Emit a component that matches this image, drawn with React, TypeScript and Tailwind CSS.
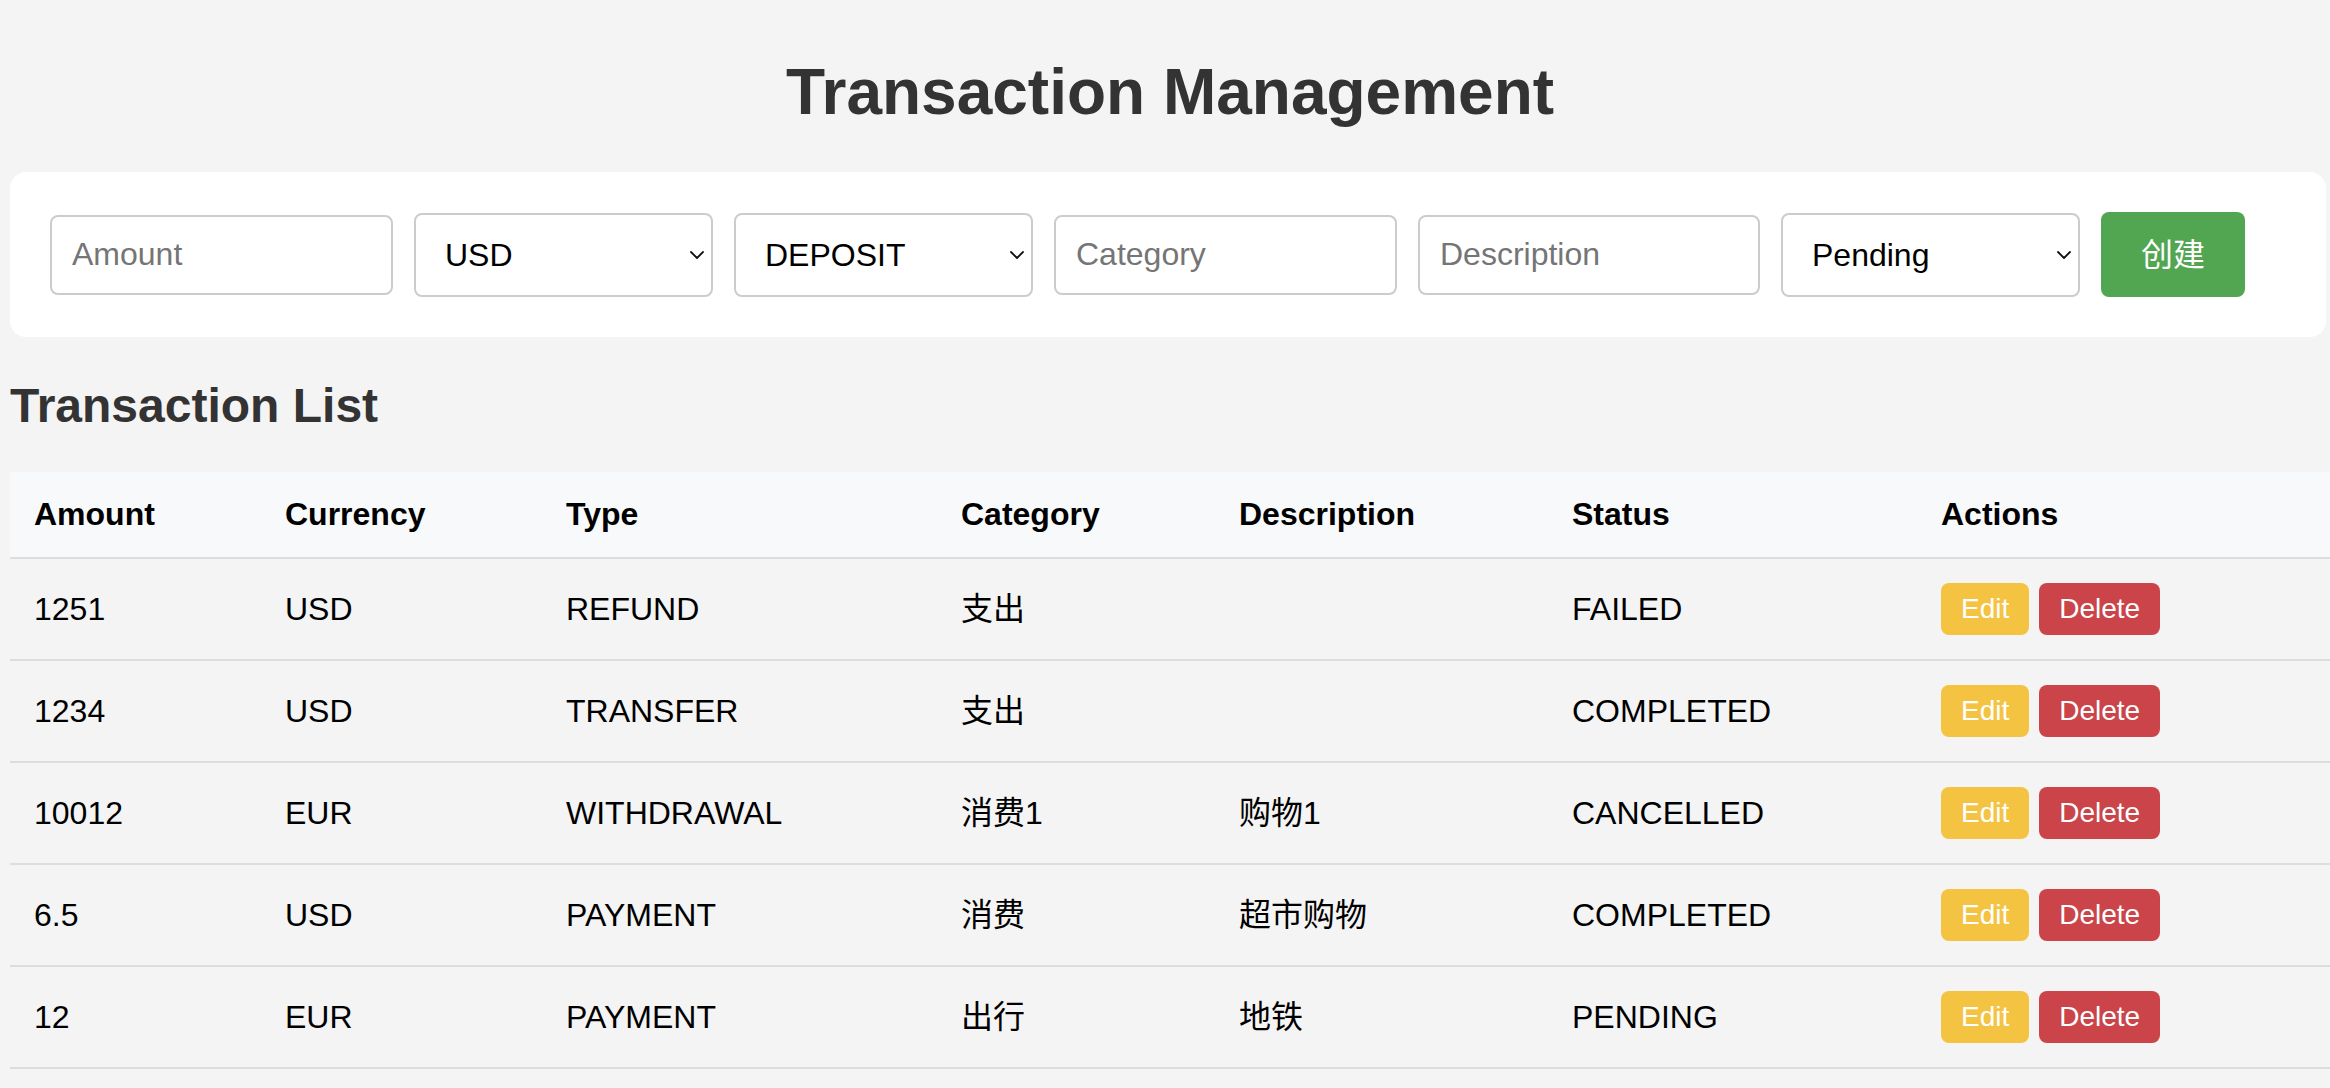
import React from "react";

const rows = [
  { amount: "1251", currency: "USD", type: "REFUND", category: "支出", description: "", status: "FAILED" },
  { amount: "1234", currency: "USD", type: "TRANSFER", category: "支出", description: "", status: "COMPLETED" },
  { amount: "10012", currency: "EUR", type: "WITHDRAWAL", category: "消费1", description: "购物1", status: "CANCELLED" },
  { amount: "6.5", currency: "USD", type: "PAYMENT", category: "消费", description: "超市购物", status: "COMPLETED" },
  { amount: "12", currency: "EUR", type: "PAYMENT", category: "出行", description: "地铁", status: "PENDING" },
];

function Chevron() {
  return (
    <svg
      className="pointer-events-none absolute right-[9px] top-1/2 -translate-y-1/2"
      width="14"
      height="8"
      viewBox="0 0 14 8"
      fill="none"
    >
      <path d="M1 1 L7 7 L13 1" stroke="#111" strokeWidth="1.8" strokeLinecap="round" strokeLinejoin="round" />
    </svg>
  );
}

function Select({ value, options }: { value: string; options: string[] }) {
  return (
    <div className="relative w-[299px] h-[84px] shrink-0">
      <select
        defaultValue={value}
        className="appearance-none w-full h-full bg-white border-2 border-[#cccccc] rounded-[8px] pl-[29px] pr-[30px] text-[32px] text-black outline-none"
      >
        {options.map((o) => (
          <option key={o} value={o}>
            {o}
          </option>
        ))}
      </select>
      <Chevron />
    </div>
  );
}

function Input({ placeholder, w }: { placeholder: string; w: string }) {
  return (
    <input
      placeholder={placeholder}
      className={`${w} h-[80px] shrink-0 bg-white border-2 border-[#cccccc] rounded-[8px] px-[20px] text-[32px] text-black placeholder:text-[#757575] outline-none`}
    />
  );
}

export default function App() {
  return (
    <div
      className="min-h-screen bg-[#f4f4f4] pl-[10px] pt-[12px] pb-[40px]"
      style={{ fontFamily: '"Liberation Sans", Arial, "Noto Sans CJK SC", sans-serif' }}
    >
      <h1 className="text-center text-[64px] leading-[74px] font-bold text-[#333333] mt-[43px] mb-[43px]">
        Transaction Management
      </h1>

      <div className="mr-[4px] bg-white rounded-[16px] p-[40px] flex items-center gap-[21px]">
        <Input placeholder="Amount" w="w-[343px]" />
        <Select value="USD" options={["USD", "EUR", "CNY"]} />
        <Select value="DEPOSIT" options={["DEPOSIT", "WITHDRAWAL", "TRANSFER", "PAYMENT", "REFUND"]} />
        <Input placeholder="Category" w="w-[343px]" />
        <Input placeholder="Description" w="w-[342px]" />
        <Select value="Pending" options={["Pending", "Completed", "Failed", "Cancelled"]} />
        <button className="h-[85px] w-[144px] shrink-0 bg-[#52a652] text-white text-[32px] rounded-[8px]">
          创建
        </button>
      </div>

      <h2 className="text-[48px] leading-[55px] font-bold text-[#333333] mt-[41px] mb-[39px]">
        Transaction List
      </h2>

      <table className="w-full table-fixed border-collapse text-[32px] text-black">
        <colgroup>
          <col className="w-[251px]" />
          <col className="w-[281px]" />
          <col className="w-[395px]" />
          <col className="w-[278px]" />
          <col className="w-[333px]" />
          <col className="w-[369px]" />
          <col />
        </colgroup>
        <thead>
          <tr className="bg-[#f8f9fa] border-b-2 border-[#dddddd]">
            {["Amount", "Currency", "Type", "Category", "Description", "Status", "Actions"].map((h) => (
              <th key={h} className="text-left font-bold px-[24px] py-[24px] leading-[37px] align-middle">
                {h}
              </th>
            ))}
          </tr>
        </thead>
        <tbody>
          {rows.map((r, i) => (
            <tr key={i} className="border-b-2 border-[#dddddd]">
              <td className="px-[24px] py-[24px] leading-[37px] align-middle">{r.amount}</td>
              <td className="px-[24px] py-[24px] leading-[37px] align-middle">{r.currency}</td>
              <td className="px-[24px] py-[24px] leading-[37px] align-middle">{r.type}</td>
              <td className="px-[24px] py-[24px] leading-[37px] align-middle">{r.category}</td>
              <td className="px-[24px] py-[24px] leading-[37px] align-middle">{r.description}</td>
              <td className="px-[24px] py-[24px] leading-[37px] align-middle">{r.status}</td>
              <td className="px-[24px] py-[24px] align-middle">
                <div className="flex gap-[10px]">
                  <button className="h-[52px] px-[20px] bg-[#f5c342] text-white text-[28px] leading-[32px] rounded-[8px]">
                    Edit
                  </button>
                  <button className="h-[52px] px-[20px] bg-[#ca444a] text-white text-[28px] leading-[32px] rounded-[8px]">
                    Delete
                  </button>
                </div>
              </td>
            </tr>
          ))}
        </tbody>
      </table>
    </div>
  );
}
